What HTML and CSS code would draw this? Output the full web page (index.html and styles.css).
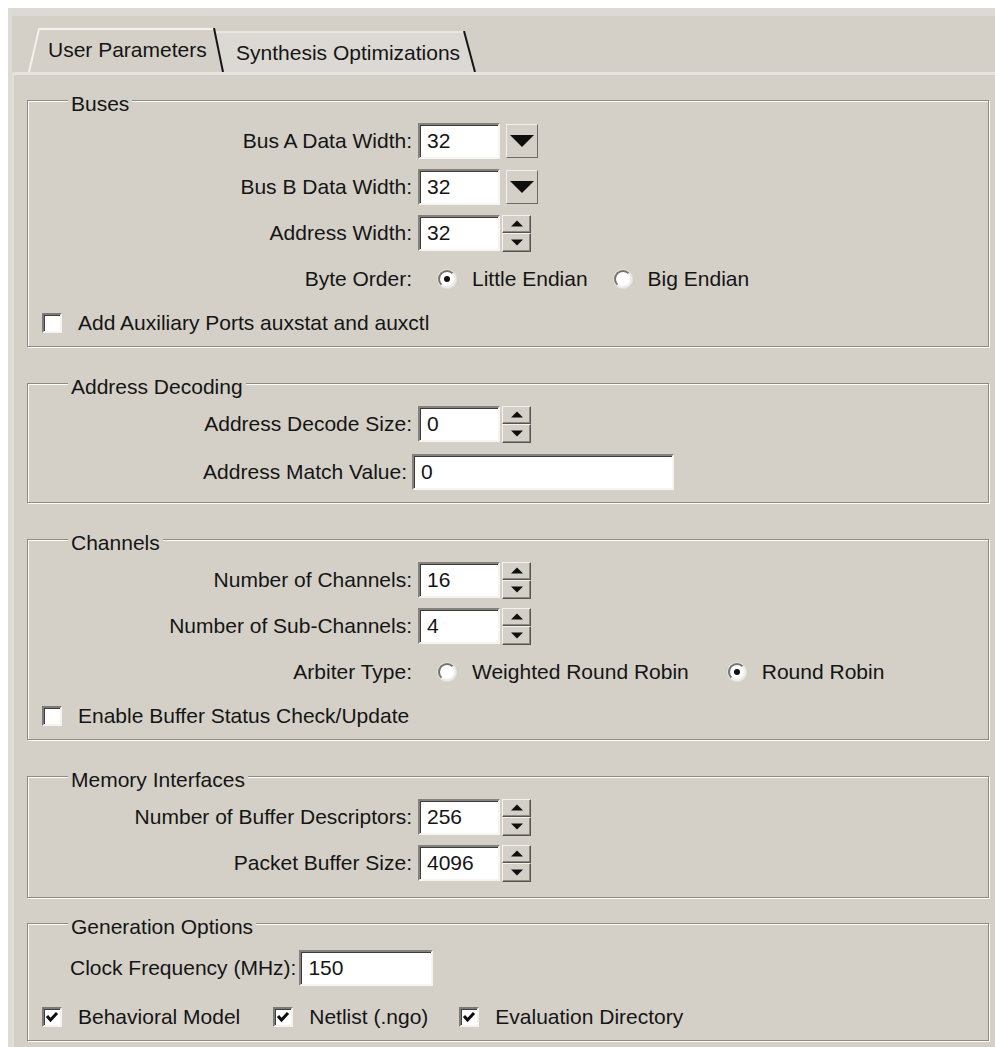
FILE: index.html
```html
<!DOCTYPE html>
<html>
<head>
<meta charset="utf-8">
<title>Core Parameters</title>
<link rel="stylesheet" href="styles.css">
</head>
<body>
<div class="window">
  <div class="tabs">
    <div class="tab tab-active">
      <svg class="tab-shape" viewBox="0 0 196 44" preserveAspectRatio="none">
        <polygon points="0,44 10,0 186,0 196,44" fill="#d4d0c8"/>
        <polyline points="1,44 11,1 186,1" fill="none" stroke="#f4f2ee" stroke-width="2"/>
        <line x1="186" y1="0" x2="195" y2="44" stroke="#161616" stroke-width="2"/>
      </svg>
      <span class="tab-label">User Parameters</span>
    </div>
    <div class="tab tab-back">
      <svg class="tab-shape" viewBox="0 0 262 41" preserveAspectRatio="none">
        <polygon points="0,0 250,0 262,41 0,41" fill="#dcd9d4"/>
        <line x1="0" y1="1" x2="250" y2="1" stroke="#e8e6e2" stroke-width="2"/>
        <line x1="250" y1="0" x2="261" y2="41" stroke="#161616" stroke-width="2"/>
      </svg>
      <span class="tab-label">Synthesis Optimizations</span>
    </div>
  </div>

  <div class="panel">
    <section class="group">
      <h2 class="group-title">Buses</h2>
      <div class="row">
        <span class="lbl">Bus A Data Width:</span>
        <span class="field w-num">32</span>
        <span class="drop-btn"><svg viewBox="0 0 24 12"><polygon points="0,0 24,0 12,12"/></svg></span>
      </div>
      <div class="row">
        <span class="lbl">Bus B Data Width:</span>
        <span class="field w-num">32</span>
        <span class="drop-btn"><svg viewBox="0 0 24 12"><polygon points="0,0 24,0 12,12"/></svg></span>
      </div>
      <div class="row">
        <span class="lbl">Address Width:</span>
        <span class="field w-num">32</span>
        <span class="spin">
          <span class="spin-btn"><svg viewBox="0 0 10 5"><polygon points="0,5 10,5 5,0"/></svg></span>
          <span class="spin-btn"><svg viewBox="0 0 10 5"><polygon points="0,0 10,0 5,5"/></svg></span>
        </span>
      </div>
      <div class="row">
        <span class="lbl">Byte Order:</span>
        <span class="opt opt-first"><span class="radio on"></span>Little Endian</span>
        <span class="opt"><span class="radio"></span>Big Endian</span>
      </div>
      <div class="row row-check">
        <span class="check"></span>
        <span>Add Auxiliary Ports auxstat and auxctl</span>
      </div>
    </section>

    <section class="group group-decode">
      <h2 class="group-title">Address Decoding</h2>
      <div class="row">
        <span class="lbl">Address Decode Size:</span>
        <span class="field w-num">0</span>
        <span class="spin">
          <span class="spin-btn"><svg viewBox="0 0 10 5"><polygon points="0,5 10,5 5,0"/></svg></span>
          <span class="spin-btn"><svg viewBox="0 0 10 5"><polygon points="0,0 10,0 5,5"/></svg></span>
        </span>
      </div>
      <div class="row row-loose">
        <span class="lbl lbl-narrow">Address Match Value:</span>
        <span class="field w-wide">0</span>
      </div>
    </section>

    <section class="group">
      <h2 class="group-title">Channels</h2>
      <div class="row">
        <span class="lbl">Number of Channels:</span>
        <span class="field w-num">16</span>
        <span class="spin">
          <span class="spin-btn"><svg viewBox="0 0 10 5"><polygon points="0,5 10,5 5,0"/></svg></span>
          <span class="spin-btn"><svg viewBox="0 0 10 5"><polygon points="0,0 10,0 5,5"/></svg></span>
        </span>
      </div>
      <div class="row">
        <span class="lbl">Number of Sub-Channels:</span>
        <span class="field w-num">4</span>
        <span class="spin">
          <span class="spin-btn"><svg viewBox="0 0 10 5"><polygon points="0,5 10,5 5,0"/></svg></span>
          <span class="spin-btn"><svg viewBox="0 0 10 5"><polygon points="0,0 10,0 5,5"/></svg></span>
        </span>
      </div>
      <div class="row">
        <span class="lbl">Arbiter Type:</span>
        <span class="opt opt-first"><span class="radio"></span>Weighted Round Robin</span>
        <span class="opt opt-far"><span class="radio on"></span>Round Robin</span>
      </div>
      <div class="row row-check">
        <span class="check"></span>
        <span>Enable Buffer Status Check/Update</span>
      </div>
    </section>

    <section class="group group-memory">
      <h2 class="group-title">Memory Interfaces</h2>
      <div class="row">
        <span class="lbl">Number of Buffer Descriptors:</span>
        <span class="field w-num">256</span>
        <span class="spin">
          <span class="spin-btn"><svg viewBox="0 0 10 5"><polygon points="0,5 10,5 5,0"/></svg></span>
          <span class="spin-btn"><svg viewBox="0 0 10 5"><polygon points="0,0 10,0 5,5"/></svg></span>
        </span>
      </div>
      <div class="row">
        <span class="lbl">Packet Buffer Size:</span>
        <span class="field w-num">4096</span>
        <span class="spin">
          <span class="spin-btn"><svg viewBox="0 0 10 5"><polygon points="0,5 10,5 5,0"/></svg></span>
          <span class="spin-btn"><svg viewBox="0 0 10 5"><polygon points="0,0 10,0 5,5"/></svg></span>
        </span>
      </div>
    </section>

    <section class="group group-gen">
      <h2 class="group-title">Generation Options</h2>
      <div class="row row-clock">
        <span class="lbl lbl-left">Clock Frequency (MHz):</span>
        <span class="field w-clock">150</span>
      </div>
      <div class="row row-check row-outputs">
        <span class="check on"><svg viewBox="0 0 14 12"><polyline points="2,5 5.5,9 12,2"/></svg></span>
        <span>Behavioral Model</span>
        <span class="check on check-next"><svg viewBox="0 0 14 12"><polyline points="2,5 5.5,9 12,2"/></svg></span>
        <span>Netlist (.ngo)</span>
        <span class="check on check-last"><svg viewBox="0 0 14 12"><polyline points="2,5 5.5,9 12,2"/></svg></span>
        <span>Evaluation Directory</span>
      </div>
    </section>
  </div>
</div>
</body>
</html>
```

FILE: styles.css
```css
* {
  box-sizing: border-box;
}

html,
body {
  margin: 0;
  padding: 0;
  background: #ffffff;
}

body {
  font-family: "Liberation Sans", Arial, sans-serif;
  font-size: 21px;
  color: #151515;
}

/* dialog frame */
.window {
  margin: 8px 0 0 8px;
  height: 1039px;
  overflow: hidden;
  background: #d4d0c8;
  border-top: 8px solid #dddad6;
  border-left: 4px solid #dedbd7;
  display: flex;
  flex-direction: column;
}

/* tab strip */
.tabs {
  flex: none;
  display: flex;
  align-items: flex-end;
  height: 56px;
  padding-left: 16px;
}

.tab {
  position: relative;
  display: flex;
  align-items: center;
}

.tab-shape {
  position: absolute;
  left: 0;
  top: 0;
  width: 100%;
  height: 100%;
}

.tab-label {
  position: relative;
  line-height: 22px;
  white-space: nowrap;
}

.tab-active {
  width: 196px;
  height: 44px;
  padding-left: 20px;
  z-index: 2;
}

.tab-back {
  width: 262px;
  height: 41px;
  margin-left: -10px;
  padding-left: 22px;
  padding-top: 3px;
  z-index: 1;
}

/* page body under the tabs */
.panel {
  flex: 1;
  border-top: 3px solid #e6e4e0;
  border-left: 2px solid #e2e0dc;
  padding: 25px 6px 0 13px;
}

/* etched group box */
.group {
  border: 1px solid #8d8a83;
  box-shadow: inset 1px 1px 0 #fdfdfb, 1px 1px 0 #fdfdfb;
  padding: 0 0 5px 0;
  margin: 0 0 36px 0;
}

.group-title {
  margin: -8px 0 0 40px;
  padding: 0 3px;
  height: 22px;
  line-height: 22px;
  width: max-content;
  background: #d4d0c8;
  font-size: 21px;
  font-weight: normal;
}

.group-decode {
  padding-bottom: 12px;
}

.group-memory {
  margin-bottom: 25px;
  padding-bottom: 16px;
}

/* form rows */
.row {
  display: flex;
  align-items: center;
  height: 36px;
  margin-top: 10px;
  white-space: nowrap;
}

.group-title + .row {
  margin-top: 8px;
}

.row-loose {
  margin-top: 12px;
}

.row-check {
  margin-top: 8px;
}

.lbl {
  flex: none;
  width: 384px;
  margin-right: 6px;
  text-align: right;
}

.lbl-narrow {
  width: 379px;
  margin-right: 5px;
}

.lbl-left {
  width: auto;
  margin-left: 42px;
  margin-right: 3px;
  text-align: left;
}

.group-gen .row-clock {
  margin-top: 12px;
}

.group-gen .row-outputs {
  margin-top: 13px;
}

/* sunken edit box */
.field {
  flex: none;
  display: flex;
  align-items: center;
  height: 36px;
  background: #ffffff;
  border: 2px solid;
  border-color: #85827c #f6f5f2 #f6f5f2 #85827c;
  box-shadow: inset 1px 1px 0 #3c3c3c;
  padding-left: 7px;
}

.w-num {
  width: 82px;
}

.w-wide {
  width: 262px;
}

.w-clock {
  width: 134px;
}

/* combo drop button */
.drop-btn {
  flex: none;
  width: 32px;
  height: 34px;
  margin-left: 6px;
  background: #d4d0c8;
  border: 1px solid;
  border-color: #f1f0ec #6d6b66 #6d6b66 #f1f0ec;
  display: flex;
  align-items: center;
  justify-content: center;
}

.drop-btn svg {
  width: 24px;
  height: 12px;
  fill: #0e0e0e;
}

/* up/down spinner */
.spin {
  flex: none;
  width: 29px;
  height: 37px;
  margin-left: 2px;
  display: flex;
  flex-direction: column;
}

.spin-btn {
  flex: 1;
  background: #d4d0c8;
  border: 1px solid;
  border-color: #f4f3f0 #555450 #555450 #f4f3f0;
  box-shadow: inset -1px -1px 0 #8d8a83;
  display: flex;
  align-items: center;
  justify-content: center;
}

.spin-btn svg {
  width: 12px;
  height: 7px;
  fill: #0e0e0e;
}

/* radio options */
.opt {
  display: flex;
  align-items: center;
  margin-left: 26px;
}

.opt-first {
  margin-left: 20px;
}

.opt-far {
  margin-left: 39px;
}

.radio {
  position: relative;
  flex: none;
  width: 18px;
  height: 18px;
  margin-right: 16px;
  border-radius: 50%;
  background: #ffffff;
  border: 2px solid;
  border-color: #77746e #efede9 #efede9 #77746e;
  box-shadow: 0 0 0 1px #e4e2dd;
}

.radio.on::after {
  content: "";
  position: absolute;
  left: 50%;
  top: 50%;
  width: 6px;
  height: 6px;
  margin: -3px 0 0 -3px;
  border-radius: 50%;
  background: #111111;
}

/* check boxes */
.check {
  flex: none;
  width: 20px;
  height: 20px;
  margin-left: 14px;
  margin-right: 16px;
  background: #ffffff;
  border: 2px solid;
  border-color: #7d7a74 #f4f3f0 #f4f3f0 #7d7a74;
  box-shadow: inset 1px 1px 0 #404040;
  display: flex;
  align-items: center;
  justify-content: center;
}

.check svg {
  width: 14px;
  height: 12px;
  fill: none;
  stroke: #0e0e0e;
  stroke-width: 3;
}

.check-next {
  margin-left: 33px;
}

.check-last {
  margin-left: 31px;
}
```
